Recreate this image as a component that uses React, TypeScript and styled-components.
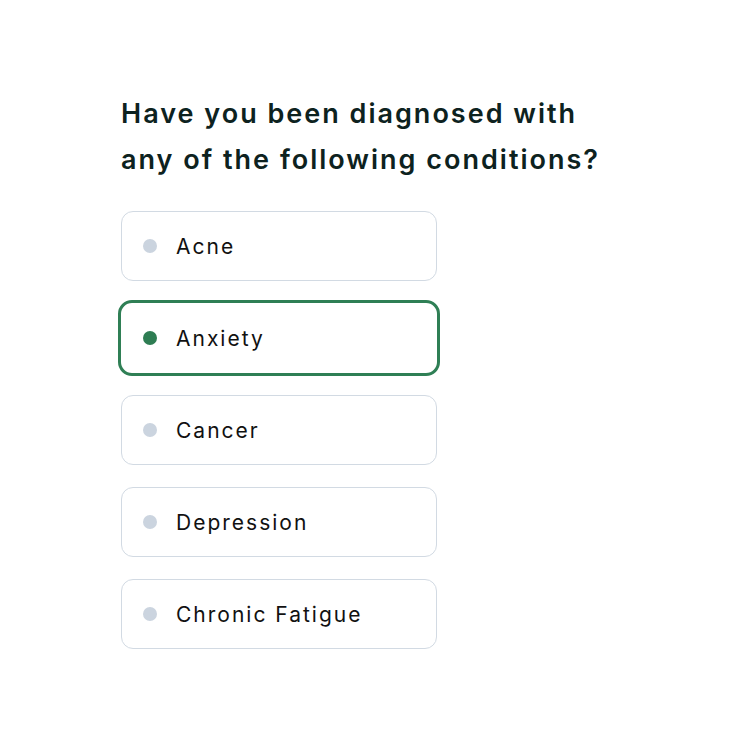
import styled, { createGlobalStyle } from 'styled-components';

const conditions = ['Acne', 'Anxiety', 'Cancer', 'Depression', 'Chronic Fatigue'];
const selected = 'Anxiety';

export default function App() {
    return (
        <>
            <GlobalStyle />
            <Page>
                <Question>
                    Have you been diagnosed with
                    <br />
                    any of the following conditions?
                </Question>
                <OptionList>
                    {conditions.map(name => (
                        <Option key={name} active={name === selected}>
                            <Dot active={name === selected} />
                            <Label>{name}</Label>
                        </Option>
                    ))}
                </OptionList>
            </Page>
        </>
    );
}

const GlobalStyle = createGlobalStyle`
    html, body {
        margin: 0;
        background: #ffffff;
    }
`;

const Page = styled('div')`
    width: 750px;
    height: 750px;
    box-sizing: border-box;
    padding: 91px 0 0 121px;
    font-family: Inter, "Open Sans", sans-serif;
`;

const Question = styled('h1')`
    margin: 0 0 28px;
    font-size: 27px;
    line-height: 46px;
    font-weight: 600;
    letter-spacing: 2px;
    color: #0d2220;
`;

const OptionList = styled('div')`
    display: flex;
    flex-direction: column;
    gap: 22px;
    width: 316px;
`;

const Option = styled('div') <{ active: boolean }>`
    display: flex;
    align-items: center;
    gap: 19px;
    box-sizing: border-box;
    height: ${props => (props.active ? '76px' : '70px')};
    margin: ${props => (props.active ? '-3px' : '0')};
    padding-left: ${props => (props.active ? '22px' : '21px')};
    border: ${props => (props.active ? '3px solid #2f7f55' : '1px solid #d2dae3')};
    border-radius: ${props => (props.active ? '14px' : '12px')};
    background: #ffffff;
    cursor: pointer;
`;

const Dot = styled('span') <{ active: boolean }>`
    flex: none;
    width: 14px;
    height: 14px;
    border-radius: 50%;
    background: ${props => (props.active ? '#2e7d53' : '#cbd4df')};
`;

const Label = styled('span')`
    font-size: 21px;
    font-weight: 400;
    letter-spacing: 2px;
    color: #111111;
`;
